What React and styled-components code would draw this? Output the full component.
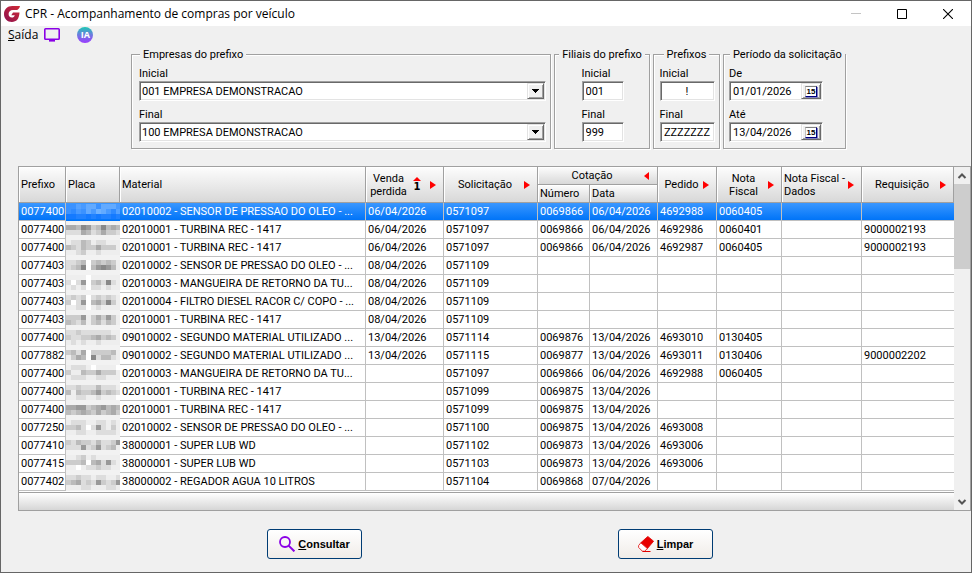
import { useState } from 'react'
import styled, { createGlobalStyle, css } from 'styled-components'

const columns = [47, 54, null, 78, 94, 52, 68, 59, 65, 80, 92]

const rows = [
  ['0077400', '02010002 - SENSOR DE PRESSAO DO OLEO - ...', '06/04/2026', '0571097', '0069866', '06/04/2026', '4692988', '0060405', '', ''],
  ['0077400', '02010001 - TURBINA REC - 1417', '06/04/2026', '0571097', '0069866', '06/04/2026', '4692986', '0060401', '', '9000002193'],
  ['0077400', '02010001 - TURBINA REC - 1417', '06/04/2026', '0571097', '0069866', '06/04/2026', '4692987', '0060405', '', '9000002193'],
  ['0077403', '02010002 - SENSOR DE PRESSAO DO OLEO - ...', '08/04/2026', '0571109', '', '', '', '', '', ''],
  ['0077403', '02010003 - MANGUEIRA DE RETORNO DA TU...', '08/04/2026', '0571109', '', '', '', '', '', ''],
  ['0077403', '02010004 - FILTRO DIESEL RACOR C/ COPO - ...', '08/04/2026', '0571109', '', '', '', '', '', ''],
  ['0077403', '02010001 - TURBINA REC - 1417', '08/04/2026', '0571109', '', '', '', '', '', ''],
  ['0077400', '09010002 - SEGUNDO MATERIAL UTILIZADO ...', '13/04/2026', '0571114', '0069876', '13/04/2026', '4693010', '0130405', '', ''],
  ['0077882', '09010002 - SEGUNDO MATERIAL UTILIZADO ...', '13/04/2026', '0571115', '0069877', '13/04/2026', '4693011', '0130406', '', '9000002202'],
  ['0077400', '02010003 - MANGUEIRA DE RETORNO DA TU...', '', '0571097', '0069866', '06/04/2026', '4692988', '0060405', '', ''],
  ['0077400', '02010001 - TURBINA REC - 1417', '', '0571099', '0069875', '13/04/2026', '', '', '', ''],
  ['0077400', '02010001 - TURBINA REC - 1417', '', '0571099', '0069875', '13/04/2026', '', '', '', ''],
  ['0077250', '02010002 - SENSOR DE PRESSAO DO OLEO - ...', '', '0571100', '0069875', '13/04/2026', '4693008', '', '', ''],
  ['0077410', '38000001 - SUPER LUB WD', '', '0571102', '0069873', '13/04/2026', '4693006', '', '', ''],
  ['0077415', '38000001 - SUPER LUB WD', '', '0571103', '0069873', '13/04/2026', '4693006', '', '', ''],
  ['0077402', '38000002 - REGADOR AGUA 10 LITROS', '', '0571104', '0069868', '07/04/2026', '', '', '', ''],
]

// hidden plates: first entry is the top of the blocks, then one grey level (hex) per block
const plates = [
  [1, '33546636664', '32436476425', '00110101101'],
  [4, 'AAB89CB8BAB', 'DDDABDCACCD'],
  [1, 'EDDBCEDDEEE', 'BCDBCCACCCE', 'EEDCEEDEEEE'],
  [3, 'DDCBFCBCBCE', 'DCB8FB989BE'],
  [0, 'EEEEFEEEEEE', 'DFD9FCBD8DE', 'EDEDFDDEDEE'],
  [2, 'DCDCFDCDCDE', 'CFD9FBAC8CE', 'EEDDFEDEEEE'],
  [4, 'CCC9ECAC9CE', 'BCDBECBDBCE'],
  [1, 'DDCDDDDDDEE', 'CDDCCBACBCE', 'EDEDEEDEEEE'],
  [3, 'CBDAFCCCCBE', 'ECABF8DBBDE'],
  [0, 'EDDDEFEEEEF', 'CEEBCCACCCE', 'EDDDEEDDEEE'],
  [2, 'DDCDDDBDDDE', 'BEBCCB9CBCD', 'EEDDEEDEEEF'],
  [4, 'AA99CBA9BAB', 'BCBABCACBAC'],
  [1, 'EDDDEEDDEDE', 'CCBDFD9DECE', 'EEDDEEDDDDE'],
  [3, 'CDBCCDBDDC9', 'DDD9DC9DCBE'],
  [0, 'EEDCEDEEEEE', 'CCCBFBAD9DE', 'EEFEDDCDDEE'],
  [2, 'DDCDDEDDEED', 'CBADCD9CDC9', 'EEEDDEEEDDE'],
]

function plateColor(level, selected) {
  const n = parseInt(level, 16)
  if (selected) return `rgb(${20 + n * 13}, ${122 + n * 8}, 255)`
  return `rgb(${n * 17}, ${n * 17}, ${n * 17})`
}

function Plate({ data, selected }) {
  const [top, ...lines] = data
  return (
    <PlateDrawing viewBox="0 0 54 18" preserveAspectRatio="none" shapeRendering="crispEdges" aria-hidden="true">
      {lines.map((line, y) =>
        line.split('').map((level, x) => (
          <rect
            key={`${y}-${x}`}
            x={x * 5}
            y={top + y * 5}
            width="5"
            height="5"
            fill={plateColor(level, selected)}
          />
        )),
      )}
    </PlateDrawing>
  )
}

function Arrow({ left }) {
  return (
    <ArrowIcon viewBox="0 0 6 8" aria-hidden="true">
      <path d={left ? 'M5 0v8L0 4z' : 'M0 0v8L6 4z'} fill="#f00" />
    </ArrowIcon>
  )
}

function HeaderCell({ label, align, arrow, sort, ...props }) {
  return (
    <Th {...props}>
      <HeaderContent>
        <HeaderLabel $align={align}>{label}</HeaderLabel>
        {sort && (
          <Sort>
            <svg width="8" height="4" viewBox="0 0 8 4" aria-hidden="true">
              <path d="M4 0l4 4H0z" fill="#f00" />
            </svg>
            {sort}
          </Sort>
        )}
        {arrow && <Arrow left={arrow === 'left'} />}
      </HeaderContent>
    </Th>
  )
}

function Combo({ id, label, value }) {
  return (
    <Field>
      <label htmlFor={id}>{label}</label>
      <Sunken>
        <Select id={id} defaultValue={value}>
          <option>001 EMPRESA DEMONSTRACAO</option>
          <option>100 EMPRESA DEMONSTRACAO</option>
        </Select>
        <DropFace aria-hidden="true">
          <svg width="7" height="4" viewBox="0 0 7 4" shapeRendering="crispEdges">
            <path d="M0 0h7v1H6v1H5v1H4v1H3V3H2V2H1V1H0z" />
          </svg>
        </DropFace>
      </Sunken>
    </Field>
  )
}

function TextField({ id, label, value, width, center }) {
  return (
    <Field $width={width}>
      <label htmlFor={id}>{label}</label>
      <Sunken>
        <Input id={id} defaultValue={value} $center={center} />
      </Sunken>
    </Field>
  )
}

function DateField({ id, label, value }) {
  return (
    <Field $width={94}>
      <label htmlFor={id}>{label}</label>
      <Sunken>
        <Input id={id} defaultValue={value} />
        <CalendarButton type="button" aria-label="Calendário">
          <CalendarDay>15</CalendarDay>
        </CalendarButton>
      </Sunken>
    </Field>
  )
}

export default function App() {
  const [selected, setSelected] = useState(0)

  return (
    <>
      <GlobalStyle />
      <Window>
        <TitleBar>
          <svg width="16" height="16" viewBox="0 0 16 16" aria-hidden="true">
            <defs>
              <linearGradient id="logo" x1="0" y1="1" x2="1" y2="0">
                <stop offset="0" stopColor="#8d1150" />
                <stop offset="1" stopColor="#d02a36" />
              </linearGradient>
            </defs>
            <path
              d="M16 0H8.2C3.4 0 0 3.3 0 8s3.3 8 7.9 8c4.5 0 7.2-2.8 7.6-9.4H9L7.3 9.3h3.5c-.5 1.7-1.5 2.3-2.9 2.3-2.1 0-3.3-1.4-3.3-3.5C4.6 5.5 6.2 3.9 8.9 3.9h4.3C14.6 3.4 15.5 2 16 0z"
              fill="url(#logo)"
            />
          </svg>
          <Title>CPR - Acompanhamento de compras por veículo</Title>
          <WindowButton type="button" aria-label="Minimizar" disabled>
            <svg width="10" height="11" viewBox="0 0 10 11">
              <path d="M0 5.5h10" stroke="#c4c4c4" />
            </svg>
          </WindowButton>
          <WindowButton type="button" aria-label="Maximizar">
            <svg width="10" height="10" viewBox="0 0 10 10">
              <path d="M.5.5h9v9h-9z" fill="none" stroke="#000" />
            </svg>
          </WindowButton>
          <WindowButton type="button" aria-label="Fechar">
            <svg width="10" height="10" viewBox="0 0 10 10">
              <path d="M0 0l10 10M10 0L0 10" stroke="#000" strokeWidth="1.1" />
            </svg>
          </WindowButton>
        </TitleBar>

        <MenuBar>
          <MenuButton type="button">
            <u>S</u>aída
          </MenuButton>
          <MenuButton type="button" aria-label="Monitor">
            <svg width="16" height="14" viewBox="0 0 16 14">
              <rect x=".8" y=".8" width="14.4" height="10.4" rx=".8" fill="none" stroke="#8a00e6" strokeWidth="1.6" />
              <path d="M5 12h6v1.6H5z" fill="#8a00e6" />
            </svg>
          </MenuButton>
          <Assistant type="button">IA</Assistant>
        </MenuBar>

        <Filters>
          <Group $grow $inset={6}>
            <legend>Empresas do prefixo</legend>
            <Combo id="empresa-inicial" label="Inicial" value="001 EMPRESA DEMONSTRACAO" />
            <Combo id="empresa-final" label="Final" value="100 EMPRESA DEMONSTRACAO" />
          </Group>
          <Group $width={96} $center>
            <legend>Filiais do prefixo</legend>
            <TextField id="filial-inicial" label="Inicial" value="001" width={42} />
            <TextField id="filial-final" label="Final" value="999" width={42} />
          </Group>
          <Group $width={67} $center>
            <legend>Prefixos</legend>
            <TextField id="prefixo-inicial" label="Inicial" value="!" width={55} center />
            <TextField id="prefixo-final" label="Final" value="ZZZZZZZ" width={55} center />
          </Group>
          <Group $width={123} $inset={4}>
            <legend>Período da solicitação</legend>
            <DateField id="periodo-de" label="De" value="01/01/2026" />
            <DateField id="periodo-ate" label="Até" value="13/04/2026" />
          </Group>
        </Filters>

        <Grid>
          <GridMain>
            <Table>
              <colgroup>
                {columns.map((width, i) => (
                  <Col key={i} $width={width} />
                ))}
              </colgroup>
              <thead>
                <tr>
                  <HeaderCell rowSpan={2} label="Prefixo" />
                  <HeaderCell rowSpan={2} label="Placa" />
                  <HeaderCell rowSpan={2} label="Material" />
                  <HeaderCell rowSpan={2} label="Venda perdida" align="center" sort="1" arrow="right" />
                  <HeaderCell rowSpan={2} label="Solicitação" align="center" arrow="right" />
                  <HeaderCell colSpan={2} label="Cotação" align="center" arrow="left" />
                  <HeaderCell rowSpan={2} label="Pedido" align="center" arrow="right" />
                  <HeaderCell rowSpan={2} label="Nota Fiscal" align="center" arrow="right" />
                  <HeaderCell rowSpan={2} label="Nota Fiscal - Dados" arrow="right" />
                  <HeaderCell rowSpan={2} label="Requisição" align="center" arrow="right" />
                </tr>
                <tr>
                  <HeaderCell label="Número" />
                  <HeaderCell label="Data" />
                </tr>
              </thead>
              <tbody>
                {rows.map(([prefix, ...cells], i) => (
                  <Row key={i} $selected={i === selected} onClick={() => setSelected(i)}>
                    <td>{prefix}</td>
                    <PlateCell>
                      <Plate data={plates[i]} selected={i === selected} />
                    </PlateCell>
                    {cells.map((cell, j) => (
                      <td key={j}>{cell}</td>
                    ))}
                  </Row>
                ))}
              </tbody>
            </Table>
            <GridFooter />
          </GridMain>
          <ScrollBar aria-hidden="true">
            <svg width="16" height="17" viewBox="0 0 16 17">
              <path d="M4.5 11L8 7.5l3.5 3.5" fill="none" stroke="#555" strokeWidth="2" />
            </svg>
            <Thumb />
            <svg width="16" height="17" viewBox="0 0 16 17">
              <path d="M4.5 7L8 10.5 11.5 7" fill="none" stroke="#555" strokeWidth="2" />
            </svg>
          </ScrollBar>
        </Grid>

        <Actions>
          <ActionButton type="button">
            <svg width="16" height="16" viewBox="0 0 16 16" aria-hidden="true">
              <circle cx="6" cy="6" r="5" fill="none" stroke="#8a00e6" strokeWidth="1.8" />
              <path d="M9.6 9.6l5.8 5.8" stroke="#8a00e6" strokeWidth="2" />
            </svg>
            <span>
              <u>C</u>onsultar
            </span>
          </ActionButton>
          <ActionButton type="button">
            <svg width="16" height="16" viewBox="0 0 16 16" aria-hidden="true">
              <path d="M9.8.4L15.6 5.2 9.4 12.6 2.8 6.8z" fill="#e80000" stroke="#e00000" strokeWidth=".8" />
              <path d="M2.8 6.8L.6 9.6v1.8l3.8 3.8h2.2L9.4 12.6z" fill="#fff" stroke="#e00000" strokeWidth=".8" />
              <path d="M4.5 15.5h8" stroke="#e00000" />
            </svg>
            <span>
              <u>L</u>impar
            </span>
          </ActionButton>
        </Actions>
      </Window>
    </>
  )
}

const GlobalStyle = createGlobalStyle`
  * {
    box-sizing: border-box;
  }

  body {
    margin: 0;
    background: #f0f0f0;
  }

  button, input, select {
    font: inherit;
    color: inherit;
  }
`

const Window = styled.div`
  display: flex;
  flex-direction: column;
  min-height: 100vh;
  border: 1px solid #666;
  background: #f0f0f0;
  color: #000;
  font: 11px/13px Roboto, 'Liberation Sans', Arial, sans-serif;
`

const TitleBar = styled.header`
  display: flex;
  align-items: center;
  height: 25px;
  padding-left: 3px;
  background: #fff;
  font: 12px/16px 'Open Sans', 'Segoe UI', sans-serif;
`

const Title = styled.h1`
  flex: 1;
  margin: 0 0 0 5px;
  font: inherit;
`

const WindowButton = styled.button`
  display: flex;
  align-items: center;
  justify-content: center;
  width: 46px;
  height: 24px;
  padding: 0;
  border: 0;
  background: none;
`

const MenuBar = styled.nav`
  display: flex;
  align-items: center;
  gap: 6px;
  height: 18px;
  padding-left: 7px;
  font: 12px/16px 'Open Sans', 'Segoe UI', sans-serif;
`

const MenuButton = styled.button`
  display: flex;
  padding: 0;
  border: 0;
  background: none;
`

const Assistant = styled.button`
  width: 16px;
  height: 16px;
  margin-left: 11px;
  padding: 0;
  border: 0;
  border-radius: 50%;
  background: linear-gradient(#1cc8b4, #6f7ae0 50%, #9a3cff);
  color: #fff;
  font: bold 9px/16px 'Open Sans', sans-serif;
`

const Filters = styled.form`
  display: flex;
  gap: 3px;
  padding: 4px 125px 0 130px;
`

const Group = styled.fieldset`
  display: flex;
  flex-direction: column;
  gap: 7px;
  flex: ${({ $grow }) => ($grow ? '1' : 'none')};
  width: ${({ $width }) => ($width ? `${$width}px` : 'auto')};
  min-width: 0;
  margin: 0;
  padding: 6px ${({ $center }) => ($center ? 0 : 4)}px 6px ${({ $inset = 0 }) => $inset}px;
  border: 1px solid #a0a0a0;
  box-shadow: 1px 1px 0 #fff, inset 1px 1px 0 #fff;
  align-items: ${({ $center }) => ($center ? 'center' : 'stretch')};

  legend {
    padding: 0 3px;
    margin-left: ${({ $center }) => ($center ? 'auto' : '2px')};
    margin-right: auto;
    background: #f0f0f0;
    white-space: nowrap;
  }
`

const Field = styled.div`
  display: flex;
  flex-direction: column;
  gap: 1px;
  width: ${({ $width }) => ($width ? `${$width}px` : 'auto')};
  margin-left: 1px;
`

const Sunken = styled.div`
  display: flex;
  height: 20px;
  border: 1px solid;
  border-color: #a0a0a0 #fff #fff #a0a0a0;
  background: #fff;
  box-shadow: inset 1px 1px 0 #696969, inset -1px -1px 0 #e3e3e3;
  padding: 1px;
`

const Input = styled.input`
  flex: 1;
  min-width: 0;
  padding: 0 ${({ $center }) => ($center ? 0 : 2)}px;
  border: 0;
  outline: 0;
  background: transparent;
  text-align: ${({ $center }) => ($center ? 'center' : 'left')};
`

const Select = styled.select`
  flex: 1;
  min-width: 0;
  padding: 0 1px;
  border: 0;
  outline: 0;
  appearance: none;
  background: transparent;
`

const raised = css`
  display: flex;
  align-items: center;
  justify-content: center;
  border: 1px solid;
  border-color: #e3e3e3 #696969 #696969 #e3e3e3;
  background: #f0f0f0;
  box-shadow: inset 1px 1px 0 #fff, inset -1px -1px 0 #a0a0a0;
`

const DropFace = styled.span`
  ${raised}
  width: 17px;
  pointer-events: none;
`

const CalendarButton = styled.button`
  ${raised}
  width: 20px;
  padding: 0;
`

const CalendarDay = styled.span`
  width: 12px;
  border: 1px solid;
  border-color: #808080 #000080 #000080 #c0c0c0;
  box-shadow: 1px 1px 0 #8080c0;
  background: #fff;
  font: bold 8px/9px 'Liberation Sans', Arial, sans-serif;
  text-align: center;
`

const Grid = styled.section`
  display: flex;
  margin: 17px 0 0 17px;
  border: 1px solid #a0a0a0;
`

const GridMain = styled.div`
  flex: 1;
  min-width: 0;
  background: #fff;
`

const Table = styled.table`
  width: 100%;
  border-collapse: separate;
  border-spacing: 0;
  table-layout: fixed;

  td {
    height: 18px;
    padding: 0 0 0 2px;
    border: solid #c0c0c0;
    border-width: 0 1px 1px 0;
    line-height: 17px;
    white-space: nowrap;
    overflow: hidden;
  }

  td:last-child {
    border-right: 0;
  }
`

const Col = styled.col`
  width: ${({ $width }) => ($width ? `${$width}px` : 'auto')};
`

const Th = styled.th`
  height: 18px;
  padding: 0 0 0 2px;
  border: solid #a0a0a0;
  border-width: 0 1px 1px 0;
  background: linear-gradient(#fdfdfd, #d8d8d8);
  box-shadow: inset 1px 1px 0 #fff;
  font-weight: normal;
  text-align: left;
`

const HeaderContent = styled.div`
  display: flex;
  align-items: center;
  padding-right: 7px;
`

const HeaderLabel = styled.span`
  flex: 1;
  text-align: ${({ $align }) => $align || 'left'};
`

const Sort = styled.span`
  display: flex;
  flex-direction: column;
  align-items: center;
  gap: 1px;
  margin: 0 9px 0 4px;
  font: bold 10px/10px 'DejaVu Sans', Verdana, sans-serif;
`

const ArrowIcon = styled.svg`
  flex: none;
  width: 6px;
  height: 8px;
`

const Row = styled.tr`
  ${({ $selected }) =>
    $selected &&
    css`
      color: #fff;

      td {
        background: linear-gradient(#3a97ff, #0074f8);
      }
    `}
`

const PlateCell = styled.td`
  && {
    padding: 0;
    border: 0;
    background-color: #f2f2f2;
  }
`

const PlateDrawing = styled.svg`
  display: block;
  width: 100%;
  height: 18px;
`

const GridFooter = styled.div`
  height: 18px;
  margin-top: 1px;
  border-top: 1px solid #a0a0a0;
  background: linear-gradient(#fff, #d6d6d6);
`

const ScrollBar = styled.div`
  display: flex;
  flex-direction: column;
  width: 16px;
  background: #f0f0f0;

  svg:last-child {
    margin-top: auto;
  }
`

const Thumb = styled.div`
  height: 85px;
  background: #cdcdcd;
`

const Actions = styled.footer`
  display: flex;
  justify-content: center;
  gap: 256px;
  padding: 18px 0 12px 8px;
`

const ActionButton = styled.button`
  display: flex;
  align-items: center;
  justify-content: center;
  gap: 3px;
  width: 95px;
  height: 30px;
  padding: 0;
  border: 1px solid #003c74;
  border-radius: 3px;
  background: linear-gradient(#fff, #f0ece8);
  font: bold 11px/13px 'Liberation Sans', Arial, sans-serif;
`
